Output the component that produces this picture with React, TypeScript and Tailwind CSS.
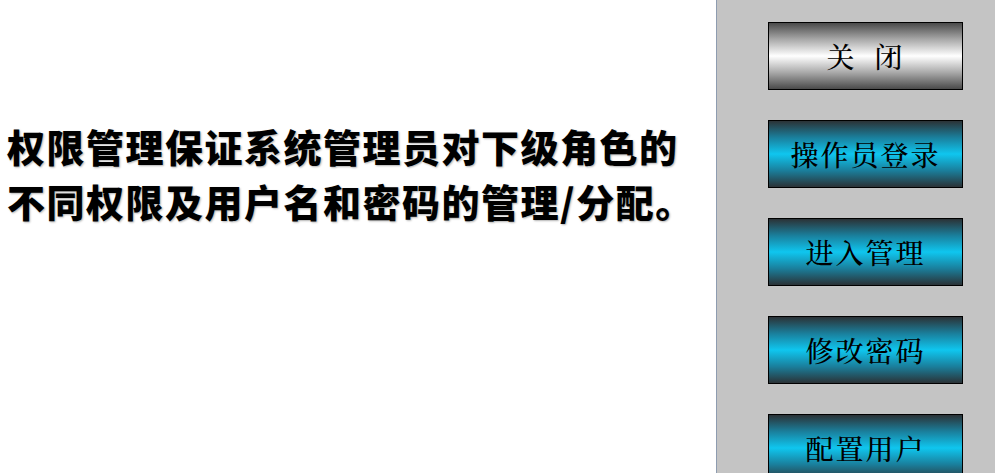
import React from "react";

const cyan =
  "bg-[linear-gradient(to_bottom,#2b3236_0%,#1a7f9c_25%,#0fc6ef_50%,#1a7f9c_75%,#2b3236_100%)]";
const silver =
  "bg-[linear-gradient(to_bottom,#4a4a4a_0%,#a9a9a9_25%,#ffffff_50%,#a9a9a9_75%,#4a4a4a_100%)]";

function Btn({ label, kind }: { label: React.ReactNode; kind: "cyan" | "silver" }) {
  return (
    <div
      className={`w-[195px] h-[68px] shrink-0 border border-black flex items-center justify-center text-black text-[28px] font-medium tracking-[2px] ${
        kind === "cyan" ? cyan : silver
      }`}
      style={{ fontFamily: '"Noto Serif CJK SC", "Noto Sans CJK SC", serif' }}
    >
      {label}
    </div>
  );
}

export default function App() {
  return (
    <div className="w-[995px] h-[473px] flex overflow-hidden bg-white">
      <div className="w-[716px] shrink-0 pl-[7px] pt-[118px]">
        <div
          className="text-[38px] leading-[55px] font-black text-black tracking-[1.5px] whitespace-nowrap [text-shadow:1px_1px_2px_rgba(0,0,0,0.3)]"
          style={{ fontFamily: '"Noto Sans CJK SC", sans-serif' }}
        >
          <div>权限管理保证系统管理员对下级角色的</div>
          <div>不同权限及用户名和密码的管理/分配。</div>
        </div>
      </div>
      <div className="flex-1 border-l border-[#8e9cb0] bg-[#c4c4c4] flex flex-col gap-[30px] pt-[22px] pl-[51px]">
        <Btn
          kind="silver"
          label={
            <span className="flex gap-[18px]">
              <span>关</span>
              <span>闭</span>
            </span>
          }
        />
        <Btn kind="cyan" label="操作员登录" />
        <Btn kind="cyan" label="进入管理" />
        <Btn kind="cyan" label="修改密码" />
        <Btn kind="cyan" label="配置用户" />
      </div>
    </div>
  );
}
